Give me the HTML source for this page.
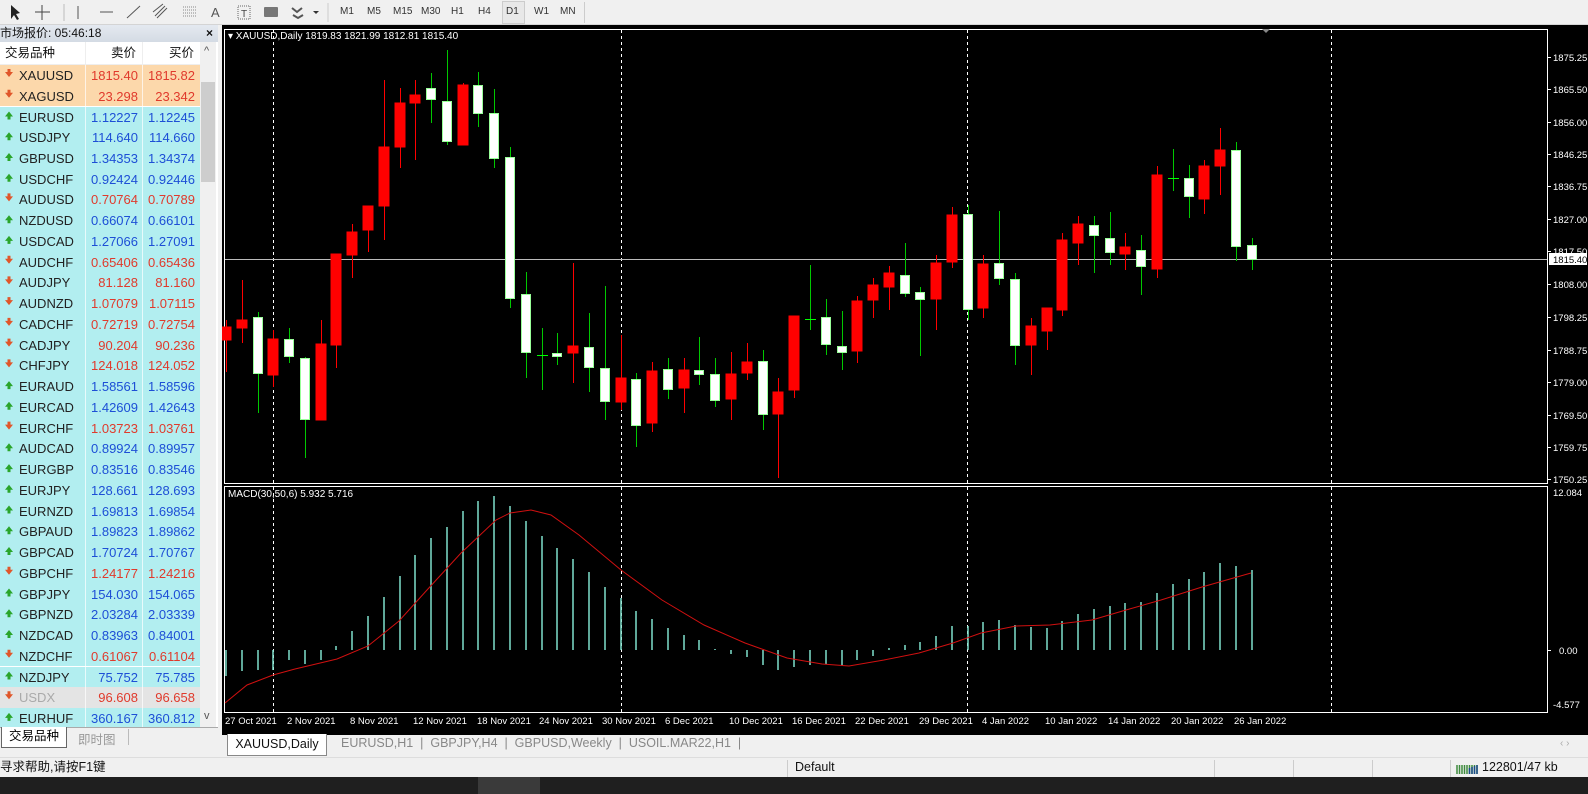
<!DOCTYPE html>
<html><head><meta charset="utf-8"><style>
*{margin:0;padding:0;box-sizing:border-box}
body{width:1588px;height:794px;overflow:hidden;background:#f0f0f0;font-family:"Liberation Sans","Noto Sans CJK SC",sans-serif;position:relative}
.a{position:absolute}
#tb{left:0;top:0;width:1588px;height:25px;background:#f0f0f0;border-bottom:1px solid #d4d4d4}
.tf{position:absolute;top:6px;font-size:10px;color:#333}
#mw{left:0;top:25px;width:218px;height:724px;background:#fff}
.row{position:absolute;left:0;width:200px;height:20.74px;font-size:13px;line-height:21px}
.row span{position:absolute;top:0}
.s{left:19px}.b{right:62px}.k{right:5px}
</style></head><body>
<div id="tb" class="a">
<svg class="a" style="left:0;top:0" width="330" height="25">
<path d="M11 5 L11 19 L14 15 L17 20 L19 19 L16 14 L20 13 Z" fill="#222"/>
<path d="M42 5 V20 M35 12 H50" stroke="#444"/>
<path d="M64 4 V21" stroke="#bbb"/>
<path d="M78 6 V19" stroke="#555"/>
<path d="M100 12 H113" stroke="#555"/>
<path d="M127 18 L140 6" stroke="#555"/>
<path d="M155 16 L165 6 M157 18 L167 8 M153 12 L163 4" stroke="#555"/>
<path d="M183 7 H197 M183 10 H197 M183 13 H197 M183 16 H197" stroke="#888" stroke-dasharray="1 1"/>
<text x="211" y="17" font-size="13" fill="#555" font-family="Liberation Sans">A</text>
<rect x="238" y="6" width="12" height="13" fill="none" stroke="#666" stroke-dasharray="1 1"/><text x="241" y="17" font-size="10" fill="#444">T</text>
<rect x="264" y="7" width="14" height="10" fill="#777" rx="1"/>
<path d="M292 8 L297 12 L302 8 M293 15 L298 18 L303 15" stroke="#555" fill="none" stroke-width="2"/>
<path d="M313 11 L319 11 L316 14Z" fill="#333"/>
<path d="M328 3 V22" stroke="#ccc"/>
</svg>
<span class="tf" style="left:340px">M1</span><span class="tf" style="left:367px">M5</span><span class="tf" style="left:393px">M15</span><span class="tf" style="left:421px">M30</span><span class="tf" style="left:451px">H1</span><span class="tf" style="left:478px">H4</span>
<div class="a" style="left:502px;top:1px;width:23px;height:23px;border:1px solid #ccc;background:#e8e8e8"></div>
<span class="tf" style="left:506px">D1</span><span class="tf" style="left:534px">W1</span><span class="tf" style="left:560px">MN</span>
<div class="a" style="left:584px;top:2px;width:1px;height:21px;background:#ccc"></div>
</div>

<div id="mw" class="a">
<div class="a" style="left:0;top:0;width:218px;height:17px;background:linear-gradient(#e4e9f0,#d4dbe4);font-size:12px;line-height:17px;color:#111">市场报价: 05:46:18<span style="position:absolute;left:206px;font-weight:bold">×</span></div>
<div class="a" style="left:0;top:17px;width:200px;height:23px;background:#fff;font-size:12.5px;line-height:23px;color:#111;border-bottom:1px solid #eee">
<span class="a" style="left:5px">交易品种</span><span class="a" style="left:111px">卖价</span><span class="a" style="left:169px">买价</span>
<div class="a" style="left:85px;top:0;width:1px;height:23px;background:#eee"></div><div class="a" style="left:142px;top:0;width:1px;height:23px;background:#eee"></div></div>
<div class="a" style="left:200px;top:17px;width:16px;height:685px;background:#f0f0f0"></div>
<div class="a" style="left:201px;top:57px;width:14px;height:100px;background:#cdcdcd"></div>
<span class="a" style="left:204px;top:20px;font-size:11px;color:#555">^</span>
<span class="a" style="left:204px;top:685px;font-size:11px;color:#555">v</span>
</div>

<div class="a" id="list" style="left:0;top:65px;width:200px;height:664px">
<div class="row" style="top:0px;background:#fcd8ab;color:#e03a2c"><span class="s" style="color:#222">XAUUSD</span><span class="b">1815.40</span><span class="k">1815.82</span></div>
<div class="row" style="top:20.74px;background:#fcd8ab;color:#e03a2c"><span class="s" style="color:#222">XAGUSD</span><span class="b">23.298</span><span class="k">23.342</span></div>
<div class="row" style="top:41.5px;background:#b2eef0;color:#1d4fd6"><span class="s" style="color:#222">EURUSD</span><span class="b">1.12227</span><span class="k">1.12245</span></div>
<div class="row" style="top:62.2px;background:#b2eef0;color:#1d4fd6"><span class="s" style="color:#222">USDJPY</span><span class="b">114.640</span><span class="k">114.660</span></div>
<div class="row" style="top:83px;background:#b2eef0;color:#1d4fd6"><span class="s" style="color:#222">GBPUSD</span><span class="b">1.34353</span><span class="k">1.34374</span></div>
<div class="row" style="top:103.7px;background:#b2eef0;color:#1d4fd6"><span class="s" style="color:#222">USDCHF</span><span class="b">0.92424</span><span class="k">0.92446</span></div>
<div class="row" style="top:124.4px;background:#b2eef0;color:#e03a2c"><span class="s" style="color:#222">AUDUSD</span><span class="b">0.70764</span><span class="k">0.70789</span></div>
<div class="row" style="top:145.2px;background:#b2eef0;color:#1d4fd6"><span class="s" style="color:#222">NZDUSD</span><span class="b">0.66074</span><span class="k">0.66101</span></div>
<div class="row" style="top:165.9px;background:#b2eef0;color:#1d4fd6"><span class="s" style="color:#222">USDCAD</span><span class="b">1.27066</span><span class="k">1.27091</span></div>
<div class="row" style="top:186.7px;background:#b2eef0;color:#e03a2c"><span class="s" style="color:#222">AUDCHF</span><span class="b">0.65406</span><span class="k">0.65436</span></div>
<div class="row" style="top:207.4px;background:#b2eef0;color:#e03a2c"><span class="s" style="color:#222">AUDJPY</span><span class="b">81.128</span><span class="k">81.160</span></div>
<div class="row" style="top:228.1px;background:#b2eef0;color:#e03a2c"><span class="s" style="color:#222">AUDNZD</span><span class="b">1.07079</span><span class="k">1.07115</span></div>
<div class="row" style="top:248.9px;background:#b2eef0;color:#e03a2c"><span class="s" style="color:#222">CADCHF</span><span class="b">0.72719</span><span class="k">0.72754</span></div>
<div class="row" style="top:269.6px;background:#b2eef0;color:#e03a2c"><span class="s" style="color:#222">CADJPY</span><span class="b">90.204</span><span class="k">90.236</span></div>
<div class="row" style="top:290.4px;background:#b2eef0;color:#e03a2c"><span class="s" style="color:#222">CHFJPY</span><span class="b">124.018</span><span class="k">124.052</span></div>
<div class="row" style="top:311.1px;background:#b2eef0;color:#1d4fd6"><span class="s" style="color:#222">EURAUD</span><span class="b">1.58561</span><span class="k">1.58596</span></div>
<div class="row" style="top:331.8px;background:#b2eef0;color:#1d4fd6"><span class="s" style="color:#222">EURCAD</span><span class="b">1.42609</span><span class="k">1.42643</span></div>
<div class="row" style="top:352.6px;background:#b2eef0;color:#e03a2c"><span class="s" style="color:#222">EURCHF</span><span class="b">1.03723</span><span class="k">1.03761</span></div>
<div class="row" style="top:373.3px;background:#b2eef0;color:#1d4fd6"><span class="s" style="color:#222">AUDCAD</span><span class="b">0.89924</span><span class="k">0.89957</span></div>
<div class="row" style="top:394.1px;background:#b2eef0;color:#1d4fd6"><span class="s" style="color:#222">EURGBP</span><span class="b">0.83516</span><span class="k">0.83546</span></div>
<div class="row" style="top:414.8px;background:#b2eef0;color:#1d4fd6"><span class="s" style="color:#222">EURJPY</span><span class="b">128.661</span><span class="k">128.693</span></div>
<div class="row" style="top:435.5px;background:#b2eef0;color:#1d4fd6"><span class="s" style="color:#222">EURNZD</span><span class="b">1.69813</span><span class="k">1.69854</span></div>
<div class="row" style="top:456.3px;background:#b2eef0;color:#1d4fd6"><span class="s" style="color:#222">GBPAUD</span><span class="b">1.89823</span><span class="k">1.89862</span></div>
<div class="row" style="top:477px;background:#b2eef0;color:#1d4fd6"><span class="s" style="color:#222">GBPCAD</span><span class="b">1.70724</span><span class="k">1.70767</span></div>
<div class="row" style="top:497.8px;background:#b2eef0;color:#e03a2c"><span class="s" style="color:#222">GBPCHF</span><span class="b">1.24177</span><span class="k">1.24216</span></div>
<div class="row" style="top:518.5px;background:#b2eef0;color:#1d4fd6"><span class="s" style="color:#222">GBPJPY</span><span class="b">154.030</span><span class="k">154.065</span></div>
<div class="row" style="top:539.2px;background:#b2eef0;color:#1d4fd6"><span class="s" style="color:#222">GBPNZD</span><span class="b">2.03284</span><span class="k">2.03339</span></div>
<div class="row" style="top:560px;background:#b2eef0;color:#1d4fd6"><span class="s" style="color:#222">NZDCAD</span><span class="b">0.83963</span><span class="k">0.84001</span></div>
<div class="row" style="top:580.7px;background:#b2eef0;color:#e03a2c"><span class="s" style="color:#222">NZDCHF</span><span class="b">0.61067</span><span class="k">0.61104</span></div>
<div class="row" style="top:601.5px;background:#b2eef0;color:#1d4fd6"><span class="s" style="color:#222">NZDJPY</span><span class="b">75.752</span><span class="k">75.785</span></div>
<div class="row" style="top:622.2px;background:#e4e4e4;color:#e03a2c"><span class="s" style="color:#aaa">USDX</span><span class="b">96.608</span><span class="k">96.658</span></div>
<div class="row" style="top:642.9px;background:#b2eef0;color:#1d4fd6"><span class="s" style="color:#222">EURHUF</span><span class="b">360.167</span><span class="k">360.812</span></div>
</div>
<!-- arrows + column lines -->
<svg class="a" style="left:0;top:65px" width="200" height="664">
<defs>
<path id="d" d="M5 7 H7.5 V4 H10.5 V7 H13 L9 12 Z"/>
<path id="u" d="M5 10 H7.5 V13 H10.5 V10 H13 L9 5 Z"/>
</defs>
<g fill="#e0562a">
<use href="#d"/><use href="#d" y="20.74"/><use href="#d" y="124.4"/><use href="#d" y="186.7"/><use href="#d" y="207.4"/><use href="#d" y="228.1"/><use href="#d" y="248.9"/><use href="#d" y="269.6"/><use href="#d" y="290.4"/><use href="#d" y="352.6"/><use href="#d" y="497.8"/><use href="#d" y="580.7"/><use href="#d" y="622.2"/>
</g>
<g fill="#2aa52a">
<use href="#u" y="41.5"/><use href="#u" y="62.2"/><use href="#u" y="83"/><use href="#u" y="103.7"/><use href="#u" y="145.2"/><use href="#u" y="165.9"/><use href="#u" y="311.1"/><use href="#u" y="331.8"/><use href="#u" y="373.3"/><use href="#u" y="394.1"/><use href="#u" y="414.8"/><use href="#u" y="435.5"/><use href="#u" y="456.3"/><use href="#u" y="477"/><use href="#u" y="518.5"/><use href="#u" y="539.2"/><use href="#u" y="560"/><use href="#u" y="601.5"/><use href="#u" y="642.9"/>
</g>
<path d="M85.5 0 V664 M142.5 0 V664" stroke="#fff" stroke-opacity=".7"/>
</svg>
<!-- bottom tabs of market watch -->
<div class="a" style="left:0;top:727px;width:218px;height:22px;background:#f0f0f0;border-top:1px solid #aaa"></div>
<div class="a" style="left:1px;top:727px;width:66px;height:21px;background:#fff;border:1px solid #666;border-top:none;font-size:12.5px;text-align:center;line-height:19px">交易品种</div>
<div class="a" style="left:78px;top:729px;font-size:12.5px;color:#999">即时图</div>
<div class="a" style="left:128px;top:729px;width:1px;height:16px;background:#bbb"></div>

<!-- chart -->
<svg class="a" style="left:222px;top:25px" width="1366" height="710" font-family="Liberation Sans" font-size="10">
<rect width="1366" height="710" fill="#000"/>
<g transform="translate(-222,-25)">
<rect x="224.5" y="29.5" width="1323" height="454" fill="none" stroke="#fff"/>
<rect x="224.5" y="486.5" width="1323" height="226" fill="none" stroke="#fff"/>
<g stroke="#fff" stroke-dasharray="3 3">
<path d="M273.5 30 V483 M273.5 487 V712 M621.5 30 V483 M621.5 487 V712 M967.5 30 V483 M967.5 487 V712 M1331.5 30 V483 M1331.5 487 V712"/>
</g>
<path d="M225 259.5 H1547" stroke="#bbb"/>
<path d="M1262 29 L1270 29 L1266 33Z" fill="#888"/>
<g stroke-width="1">
<g stroke="#ff0000" fill="#ff0000">
<path d="M226.5 320V372M242.5 280V343M273.5 330V387M321.5 320V420M336.5 254V368M352.5 224V278M368.5 206V252M384.5 80V240M400.5 88V168M415.5 80V160M463.5 83V145M573.5 263V383M621.5 335V410M652.5 362V432M684.5 358V413M731.5 352V420M747.5 343V380M778.5 378V478M794.5 316V398M857.5 296V363M873.5 278V318M889.5 266V310M936.5 255V330M952.5 207V268M983.5 255V318M1031.5 318V375M1047.5 308V350M1062.5 233V316M1078.5 216V265M1125.5 233V270M1157.5 166V278M1204.5 160V214M1220.5 128V195"/>
<rect x="222" y="327" width="9" height="13"/><rect x="237" y="320" width="10" height="8"/><rect x="268" y="339" width="10" height="36"/><rect x="316" y="344" width="10" height="76"/><rect x="331" y="254" width="10" height="91"/><rect x="347" y="232" width="10" height="23"/><rect x="363" y="206" width="10" height="24"/><rect x="379" y="147" width="10" height="59"/><rect x="395" y="103" width="10" height="44"/><rect x="410" y="95" width="10" height="8"/><rect x="458" y="85" width="10" height="60"/><rect x="568" y="346" width="10" height="7"/><rect x="616" y="378" width="10" height="24"/><rect x="647" y="371" width="10" height="52"/><rect x="679" y="370" width="10" height="18"/><rect x="726" y="374" width="10" height="25"/><rect x="742" y="362" width="10" height="11"/><rect x="773" y="392" width="10" height="22"/><rect x="789" y="316" width="10" height="74"/><rect x="852" y="301" width="10" height="50"/><rect x="868" y="285" width="10" height="15"/><rect x="884" y="273" width="10" height="14"/><rect x="931" y="263" width="10" height="36"/><rect x="947" y="215" width="10" height="47"/><rect x="978" y="264" width="10" height="44"/><rect x="1026" y="326" width="10" height="19"/><rect x="1042" y="308" width="10" height="23"/><rect x="1057" y="240" width="10" height="70"/><rect x="1073" y="224" width="10" height="19"/><rect x="1120" y="247" width="10" height="7"/><rect x="1152" y="175" width="10" height="94"/><rect x="1199" y="166" width="10" height="33"/><rect x="1215" y="150" width="10" height="16"/>
</g>
<g stroke="#00c800">
<path d="M258.5 312V413M289.5 328V363M305.5 357V458M431.5 73V123M447.5 50V145M478.5 72V127M494.5 89V168M510.5 147V308M526.5 272V378M542.5 328V390M557.5 333V365M589.5 313V392M605.5 286V420M636.5 373V447M668.5 358V399M699.5 337V385M715.5 358V407M763.5 350V430M810.5 265V330M826.5 299V355M842.5 311V370M905.5 243V297M920.5 287V356M968.5 205V320M999.5 211V285M1015.5 273V365M1094.5 216V273M1110.5 212V265M1141.5 235V295M1173.5 149V191M1189.5 165V218M1236.5 142V261M1252.5 238V270"/>
<path d="M537 355.5H548M1168 178.5H1179M805 319.5H816" stroke="#00ff00"/>
</g>
<g fill="#fff" stroke="#9f9">
<rect x="253.5" y="317.5" width="9" height="56"/><rect x="284.5" y="339.5" width="9" height="17"/><rect x="300.5" y="358.5" width="9" height="61"/><rect x="426.5" y="88.5" width="9" height="11"/><rect x="442.5" y="101.5" width="9" height="40"/><rect x="473.5" y="85.5" width="9" height="28"/><rect x="489.5" y="113.5" width="9" height="45"/><rect x="505.5" y="157.5" width="9" height="141"/><rect x="521.5" y="294.5" width="9" height="58"/><rect x="552.5" y="353.5" width="9" height="3"/><rect x="584.5" y="347.5" width="9" height="20"/><rect x="600.5" y="368.5" width="9" height="33"/><rect x="631.5" y="379.5" width="9" height="46"/><rect x="663.5" y="369.5" width="9" height="20"/><rect x="694.5" y="370.5" width="9" height="4"/><rect x="710.5" y="374.5" width="9" height="26"/><rect x="758.5" y="361.5" width="9" height="53"/><rect x="821.5" y="317.5" width="9" height="27"/><rect x="837.5" y="346.5" width="9" height="6"/><rect x="900.5" y="275.5" width="9" height="18"/><rect x="915.5" y="292.5" width="9" height="7"/><rect x="963.5" y="214.5" width="9" height="95"/><rect x="994.5" y="263.5" width="9" height="15"/><rect x="1010.5" y="279.5" width="9" height="66"/><rect x="1089.5" y="225.5" width="9" height="10"/><rect x="1105.5" y="238.5" width="9" height="14"/><rect x="1136.5" y="250.5" width="9" height="16"/><rect x="1184.5" y="178.5" width="9" height="18"/><rect x="1231.5" y="150.5" width="9" height="96"/><rect x="1247.5" y="245.5" width="9" height="14"/>
</g>
</g>
<path stroke="#7fe0cc" stroke-width="1.5" d="M226 650V676M242 650V671M258 650V670M273 650V670M289 650V660M305 650V664M321 650V660M336 650V646M352 650V631M368 650V616M384 650V597M400 650V576M415 650V555M431 650V538M447 650V527M463 650V511M478 650V501M494 650V496M510 650V506M526 650V521M542 650V536M557 650V548M573 650V559M589 650V572M605 650V587M621 650V598M636 650V611M652 650V619M668 650V628M684 650V635M699 650V640M715 650V649M731 650V654M747 650V657M763 650V665M778 650V670M794 650V667M810 650V665M826 650V664M842 650V665M857 650V660M873 650V656M889 650V648M905 650V645M920 650V642M936 650V636M952 650V626M968 650V626M983 650V622M999 650V620M1015 650V625M1031 650V627M1047 650V628M1062 650V621M1078 650V614M1094 650V609M1110 650V606M1125 650V603M1141 650V602M1157 650V593M1173 650V584M1189 650V579M1204 650V572M1220 650V563M1236 650V566M1252 650V570"/>
<polyline fill="none" stroke="#d01010" points="225,703 247,685 273,675 295,669 337,659 368,646 399,621 427,590 461,553 496,520 510,513 531,510 551,515 579,535 621,570 662,600 704,625 745,643 787,658 822,664 849,666 884,660 919,653 953,643 981,633 1016,626 1050,625 1092,620 1126,610 1161,600 1202,587 1251,573"/>
<g fill="#fff">
<text x="228" y="39">▾ XAUUSD,Daily  1819.83 1821.99 1812.81 1815.40</text>
<text x="228" y="497">MACD(30,50,6) 5.932 5.716</text>
<g font-size="9.5">
<text x="1553" y="61">1875.25</text><text x="1553" y="93">1865.50</text><text x="1553" y="126">1856.00</text><text x="1553" y="158">1846.25</text><text x="1553" y="190">1836.75</text><text x="1553" y="223">1827.00</text><text x="1553" y="255">1817.50</text><text x="1553" y="288">1808.00</text><text x="1553" y="321">1798.25</text><text x="1553" y="354">1788.75</text><text x="1553" y="386">1779.00</text><text x="1553" y="419">1769.50</text><text x="1553" y="451">1759.75</text><text x="1553" y="483">1750.25</text>
<text x="1553" y="496">12.084</text><text x="1559" y="654">0.00</text><text x="1553" y="708">-4.577</text>
<text x="225" y="724">27 Oct 2021</text><text x="287" y="724">2 Nov 2021</text><text x="350" y="724">8 Nov 2021</text><text x="413" y="724">12 Nov 2021</text><text x="477" y="724">18 Nov 2021</text><text x="539" y="724">24 Nov 2021</text><text x="602" y="724">30 Nov 2021</text><text x="665" y="724">6 Dec 2021</text><text x="729" y="724">10 Dec 2021</text><text x="792" y="724">16 Dec 2021</text><text x="855" y="724">22 Dec 2021</text><text x="919" y="724">29 Dec 2021</text><text x="982" y="724">4 Jan 2022</text><text x="1045" y="724">10 Jan 2022</text><text x="1108" y="724">14 Jan 2022</text><text x="1171" y="724">20 Jan 2022</text><text x="1234" y="724">26 Jan 2022</text>
</g>
</g>
<g stroke="#fff"><path d="M1547 57.5h4M1547 89.5h4M1547 122.5h4M1547 154.5h4M1547 186.5h4M1547 219.5h4M1547 251.5h4M1547 284.5h4M1547 317.5h4M1547 350.5h4M1547 382.5h4M1547 415.5h4M1547 447.5h4M1547 479.5h4M1547 650.5h4"/></g>
<rect x="1549" y="253" width="38" height="12" fill="#fff"/>
<text x="1553" y="263" font-size="9.5" fill="#000">1815.40</text>
</g>
</svg>

<div class="a" style="left:222px;top:735px;width:1366px;height:22px;background:#f0f0f0"></div>
<div class="a" style="left:227px;top:734px;width:100px;height:22px;background:#fff;border:1px solid #888;border-top:none;font-size:12.5px;line-height:21px;text-align:center;color:#111">XAUUSD,Daily</div>
<div class="a" style="left:341px;top:736px;font-size:12.5px;color:#888">EURUSD,H1 &nbsp;| &nbsp;GBPJPY,H4 &nbsp;| &nbsp;GBPUSD,Weekly &nbsp;| &nbsp;USOIL.MAR22,H1 &nbsp;|</div>
<div class="a" style="left:1560px;top:738px;font-size:10px;color:#aaa">‹ ›</div>
<div class="a" style="left:0;top:757px;width:1588px;height:20px;background:#f0f0f0;border-top:1px solid #ddd;font-size:12.5px;line-height:19px;color:#111">
<span class="a" style="left:0">寻求帮助,请按F1键</span>
<span class="a" style="left:787px;top:2px;width:1px;height:17px;background:#ccc"></span>
<span class="a" style="left:795px">Default</span>
<span class="a" style="left:1214px;top:2px;width:1px;height:17px;background:#ccc"></span>
<span class="a" style="left:1293px;top:2px;width:1px;height:17px;background:#ccc"></span>
<span class="a" style="left:1372px;top:2px;width:1px;height:17px;background:#ccc"></span>
<span class="a" style="left:1450px;top:2px;width:1px;height:17px;background:#ccc"></span>
<svg class="a" style="left:1456px;top:4px" width="24" height="12"><path d="M1 12V3M3.5 12V3M6 12V3M8.5 12V3M11 12V3M13.5 12V3M16 12V3M18.5 12V3M21 12V3" stroke="#3d8a3d" stroke-width="1.5"/><path d="M13.5 12V6M16 12V5M18.5 12V4M21 12V3" stroke="#1a4a8a" stroke-width="1.5"/></svg>
<span class="a" style="left:1482px">122801/47 kb</span>
</div>
<div class="a" style="left:0;top:777px;width:1588px;height:17px;background:#1f1f1f"></div>
<div class="a" style="left:478px;top:777px;width:62px;height:17px;background:#3a3a3a"></div>
</body></html>
